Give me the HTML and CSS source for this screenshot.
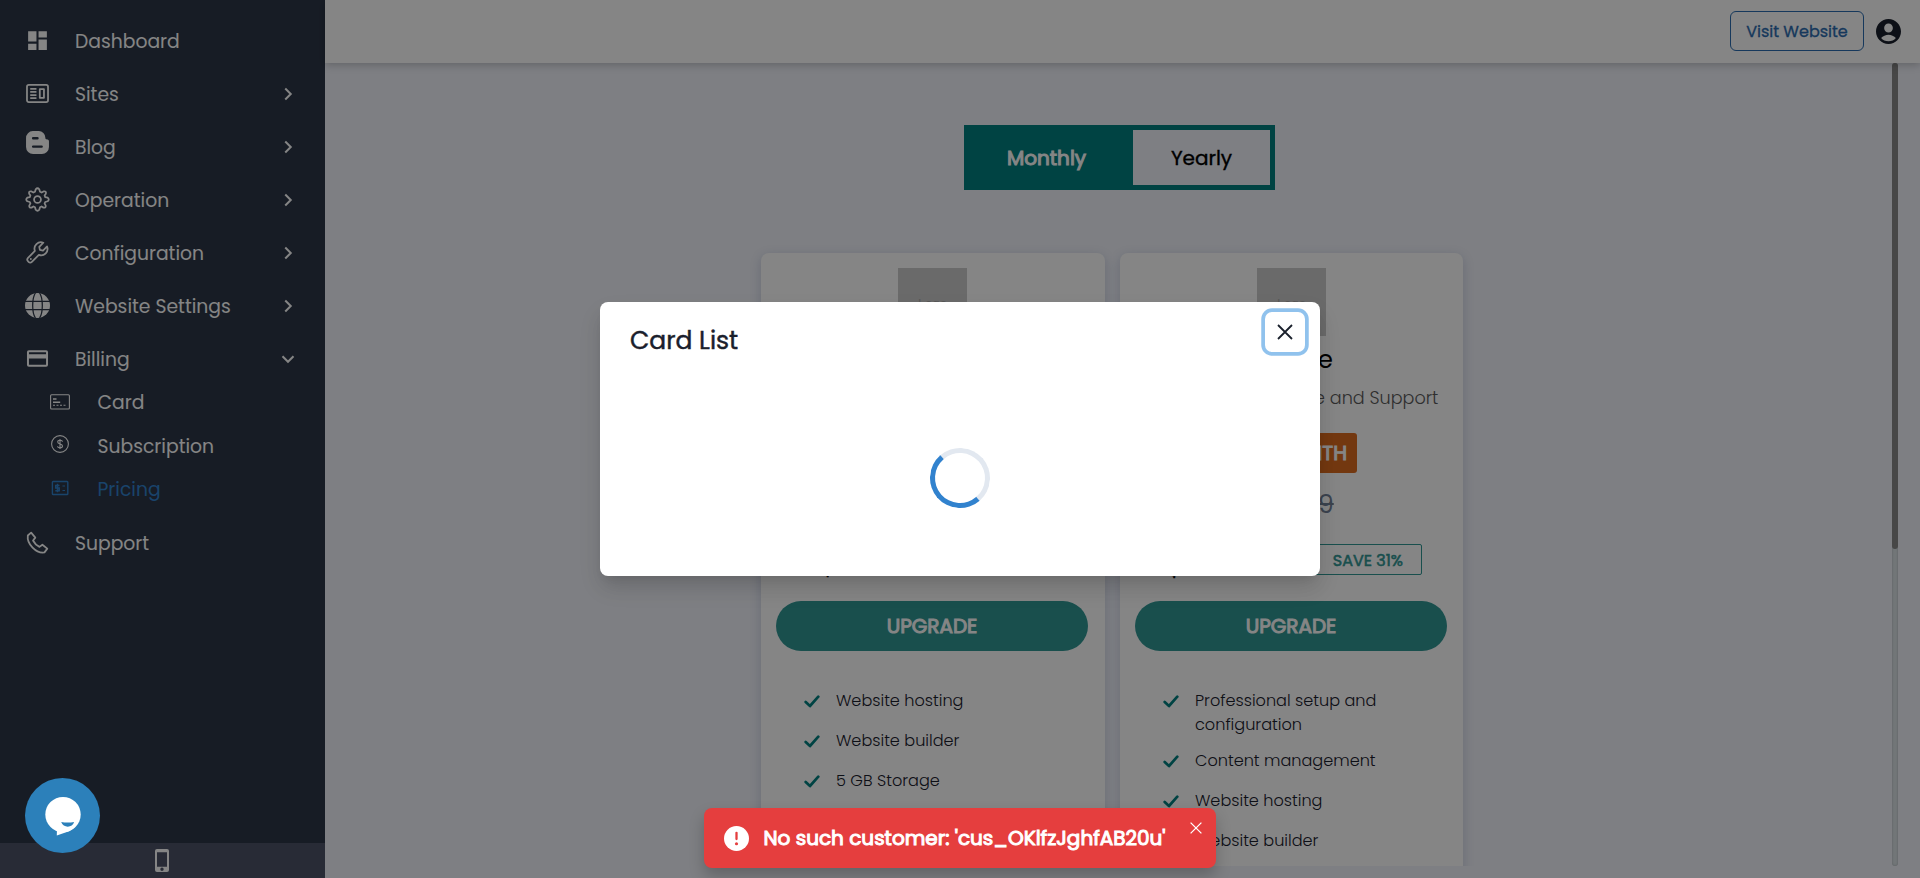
FILE: index.html
```html
<!DOCTYPE html>
<html lang="en">
<head>
<meta charset="utf-8">
<title>Pricing</title>
<link rel="stylesheet" href="styles.css">
</head>
<body>
<div class="app">
  <aside class="sidebar">
    <nav class="nav">
      <a class="item"><svg class="ico" viewBox="0 0 24 24"><path d="M3 13h8V3H3v10zm0 8h8v-6H3v6zm10 0h8V11h-8v10zm0-18v6h8V3h-8z"/></svg><span>Dashboard</span></a>
      <a class="item"><svg class="ico line" viewBox="0 0 24 24"><rect x="1.900" y="3.700" width="20.200" height="16.600" rx="1.800"/><path d="M5 7.500h6M5 10.500h6M5 13.500h6M5 16.500h6M14.200 7.900h4v8.200h-4z"/></svg><span>Sites</span><svg class="chev" viewBox="0 0 24 24"><path d="M9 6l6 6-6 6"/></svg></a>
      <a class="item"><svg class="ico raised" viewBox="0 0 24 24"><path fill-rule="evenodd" d="M7.500 1h5.700a6.300 6.300 0 0 1 6.300 6.300c0 1.300.6 1.900 1.700 1.900 1.100 0 1.800.6 1.800 1.700v5.300A6.800 6.800 0 0 1 16.200 23H7.800A6.800 6.800 0 0 1 1 16.200V7.800A6.700 6.700 0 0 1 7.500 1zm.3 5.800a1.150 1.150 0 0 0 0 2.300h4.200a1.150 1.150 0 0 0 0-2.300zm0 8a1.150 1.150 0 0 0 0 2.300h8.200a1.150 1.150 0 0 0 0-2.300z"/></svg><span>Blog</span><svg class="chev" viewBox="0 0 24 24"><path d="M9 6l6 6-6 6"/></svg></a>
      <a class="item"><svg class="ico line" viewBox="0 0 24 24"><circle cx="12" cy="12" r="3.300"/><path d="M10.300 2.200Q12 .2 13.700 2.200L14.400 4.600 16 5.300 18.200 4.100Q20.700 4 20 6.400L18.800 8.200 19.400 9.700 21.800 10.300Q23.800 12 21.800 13.700L19.400 14.400 18.800 15.800 19.900 17.900Q20.200 20.300 17.700 19.800L15.900 18.700 14.400 19.400 13.700 21.800Q12 23.800 10.300 21.800L9.600 19.400 8.100 18.700 6.300 19.800Q3.800 20.300 4.100 17.900L5.200 15.800 4.600 14.400 2.200 13.700Q.2 12 2.200 10.300L4.600 9.700 5.200 8.200 4 6.400Q3.300 4 5.800 4.100L8 5.300 9.600 4.600z"/></svg><span>Operation</span><svg class="chev" viewBox="0 0 24 24"><path d="M9 6l6 6-6 6"/></svg></a>
      <a class="item"><svg class="ico line" viewBox="0 0 24 24"><path d="M21.200 6.200l-3.900 3.900-3-.6-.6-3 3.900-3.900a6.200 6.200 0 0 0-8.100 7.900L2.900 17.200a2.300 2.300 0 0 0 0 3.200l.5.500a2.300 2.300 0 0 0 3.200 0l6.700-6.600a6.200 6.200 0 0 0 7.900-8.100z"/><circle class="dot" cx="5.600" cy="18.300" r=".9"/></svg><span>Configuration</span><svg class="chev" viewBox="0 0 24 24"><path d="M9 6l6 6-6 6"/></svg></a>
      <a class="item"><svg class="ico" viewBox="0 0 24 24"><circle cx="12" cy="12" r="12"/><path class="cut" d="M0 8h24M0 16h24M10 0C6.500 5 6.500 19 10 24M14 0c3.500 5 3.500 19 0 24"/></svg><span>Website Settings</span><svg class="chev" viewBox="0 0 24 24"><path d="M9 6l6 6-6 6"/></svg></a>
      <a class="item"><svg class="ico" viewBox="0 0 24 24"><path fill-rule="evenodd" d="M3.800 4h16.400a1.900 1.900 0 0 1 1.900 2v12a1.900 1.900 0 0 1-1.900 2H3.800a1.900 1.900 0 0 1-1.900-2V6a1.900 1.900 0 0 1 1.900-2zm0 2v1.800h16.400V6zm0 6v6h16.400v-6z"/></svg><span>Billing</span><svg class="chev" viewBox="0 0 24 24"><path d="M6 9l6 6 6-6"/></svg></a>
      <div class="sub">
        <a class="subitem"><svg class="sico" viewBox="0 0 20 20"><rect x=".6" y="2.800" width="18.800" height="14.200" rx="1"/><path d="M3 7h3.500M3 10.300h7.200" stroke-width="1.500"/><path d="M3 13.300h13" stroke-dasharray="2 1.500"/></svg><span>Card</span></a>
        <a class="subitem"><svg class="sico up" viewBox="0 0 20 20"><circle cx="10" cy="10" r="8.400"/><path d="M12.500 7.700C12.300 5.700 7.700 5.700 7.700 8s4.800 1.700 4.800 4-4.800 2.500-5 .2M10 5v10"/></svg><span>Subscription</span></a>
        <a class="subitem active"><svg class="sico up" viewBox="0 0 20 20"><rect x="2.400" y="3.500" width="15.400" height="13" rx=".8" stroke-width="1.400"/><path d="M9.500 7.500H5.700v2.500h3.500v2.700H5.300M7.500 5.700v8.600" stroke-width="1.500"/><path d="M12.500 8h2.500M12.500 12.500h2.500"/></svg><span>Pricing</span></a>
      </div>
      <a class="item"><svg class="ico line" viewBox="0 0 24 24"><path d="M2.700 5.300L5.900 2.500l4 4.800-2.200 2.800c1.300 2.600 3.400 4.800 6.200 6.100l2.800-2.100 4.700 3.800-2.700 3.600C10.700 22.800 1.600 13.200 2.700 5.300z"/></svg><span>Support</span></a>
    </nav>
    <div class="sidefoot"><svg class="phone" viewBox="0 0 14 23"><path fill-rule="evenodd" d="M2 0h10a2 2 0 0 1 2 2v19a2 2 0 0 1-2 2H2a2 2 0 0 1-2-2V2a2 2 0 0 1 2-2zm0 3.200v14.600h10V3.200zm5 15.400a1.700 1.700 0 1 0 0 3.400 1.700 1.700 0 0 0 0-3.400z"/></svg></div>
  </aside>
  <div class="main">
    <header class="header">
      <button class="visit strong">Visit Website</button>
      <svg class="avatar" viewBox="2 2 20 20"><path d="M12 2C6.480 2 2 6.480 2 12s4.480 10 10 10 10-4.480 10-10S17.520 2 12 2zm0 3.500c1.900 0 3.500 1.600 3.500 3.600S13.900 12.700 12 12.700 8.500 11.100 8.500 9.100s1.600-3.600 3.500-3.600zm0 14.300c-2.500 0-4.500-.9-5.900-2.600 1.200-1.700 3.900-2.700 5.900-2.700s4.700 1 5.900 2.700c-1.400 1.700-3.400 2.600-5.900 2.600z"/></svg>
    </header>
    <div class="scroll">
      <div class="content">
        <div class="toggle"><div class="on heavy">Monthly</div><div class="off strong">Yearly</div></div>
        <div class="cards">
          <section class="card">
            <div class="logo">Logo</div>
            <div class="price"><b class="strong">$</b></div>
            <button class="upgrade heavy">UPGRADE</button>
            <ul class="list">
              <li><svg class="tick" viewBox="0 0 16 13"><path d="M1.700 7l4.300 4L14.300 1.700"/></svg><span>Website hosting</span></li>
              <li><svg class="tick" viewBox="0 0 16 13"><path d="M1.700 7l4.300 4L14.300 1.700"/></svg><span>Website builder</span></li>
              <li><svg class="tick" viewBox="0 0 16 13"><path d="M1.700 7l4.300 4L14.300 1.700"/></svg><span>5 GB Storage</span></li>
            </ul>
          </section>
          <section class="card premium">
            <div class="logo">Logo</div>
            <div class="plan">e</div>
            <div class="desc">e and Support</div>
            <div class="badge heavy">NTH</div>
            <div class="old">9</div>
            <div class="price"><b class="strong">$</b><span class="save strong">SAVE 31%</span></div>
            <button class="upgrade heavy">UPGRADE</button>
            <ul class="list">
              <li><svg class="tick" viewBox="0 0 16 13"><path d="M1.700 7l4.300 4L14.300 1.700"/></svg><span>Professional setup and<br>configuration</span></li>
              <li><svg class="tick" viewBox="0 0 16 13"><path d="M1.700 7l4.300 4L14.300 1.700"/></svg><span>Content management</span></li>
              <li><svg class="tick" viewBox="0 0 16 13"><path d="M1.700 7l4.300 4L14.300 1.700"/></svg><span>Website hosting</span></li>
              <li><svg class="tick" viewBox="0 0 16 13"><path d="M1.700 7l4.300 4L14.300 1.700"/></svg><span>Website builder</span></li>
            </ul>
          </section>
        </div>
      </div>
      <div class="track"><div class="thumb"></div></div>
    </div>
  </div>
</div>
<div class="overlay">
  <div class="modal">
    <div class="mhead"><h2 class="strong">Card List</h2><button class="close"><svg viewBox="0 0 16 16"><path d="M1 1l14 14M15 1L1 15"/></svg></button></div>
    <div class="mbody"><div class="spinner"></div></div>
  </div>
</div>
<div class="chat"><svg viewBox="0 0 75 75"><circle class="bub" cx="38" cy="36.600" r="17.700"/><path class="bub" d="M32 50l-.2 7.500L44 53.300l6-4z"/><path class="smile" d="M36.200 44q6.500 1 12.900 0c-1.500 6.200-11 6.200-12.900 0z"/></svg></div>
<div class="toast">
  <svg class="warn" viewBox="0 0 24 24"><circle cx="12" cy="12" r="12"/><path d="M12 6.500v6"/><circle class="wdot" cx="12" cy="17" r="1.500"/></svg>
  <span class="msg heavy">No such customer: 'cus_OKlfzJghfAB20u'</span>
  <svg class="tx" viewBox="0 0 12 12"><path d="M.6.6l10.800 10.800M11.400.6L.6 11.400"/></svg>
</div>
</body>
</html>
```

FILE: styles.css
```css
* { box-sizing: border-box; }
body { margin: 0; height: 878px; overflow: hidden; font-family: Poppins, Inter, "Open Sans", sans-serif; color: #1a202c; background: #f1f3fb; }
button { font: inherit; border: 0; background: none; padding: 0; }
/* emboldened regular weight keeps the narrow regular advances */
.strong, .heavy { font-weight: 400; -webkit-text-stroke: .018em currentColor; }
.heavy { -webkit-text-stroke-width: .05em; }
.app { display: flex; height: 878px; }

.sidebar { width: 325px; flex: none; background: #2d3748; display: flex; flex-direction: column; color: #fff; }
.nav { flex: 1; padding-top: 14px; }
.item { display: flex; align-items: center; height: 53px; padding: 0 25px; font-size: 18.750px; }
.item span { flex: 1; margin-left: 25px; white-space: nowrap; padding-top: 1px; }
.ico { width: 25px; height: 25px; fill: #fff; overflow: visible; }
.ico.line { fill: none; stroke: #fff; stroke-width: 1.700; stroke-linejoin: round; }
.ico.raised { margin-bottom: 9px; }
.ico .cut { fill: none; stroke: #2d3748; stroke-width: 1.200; }
.ico .dot { fill: #fff; stroke: none; }
.chev { width: 22px; height: 22px; fill: none; stroke: #fff; stroke-width: 2.200; margin-right: 1px; }
.sub { margin: -5px 0 5px; }
.subitem { display: flex; align-items: center; height: 43.700px; padding-left: 50px; font-size: 18.750px; }
.subitem span { margin-left: 27.500px; padding-top: 1px; }
.sico { width: 20px; height: 20px; fill: none; stroke: #fff; stroke-width: 1.100; }
.sico.up { margin-bottom: 3px; }
.active { color: #3182ce; }
.active .sico { stroke: #3182ce; }
.sidefoot { height: 35px; background: #4d5368; display: flex; justify-content: center; align-items: center; padding-right: 1px; }
.phone { width: 14px; height: 23px; fill: #fff; }

.main { flex: 1; display: flex; flex-direction: column; min-width: 0; }
.header { height: 63px; background: #fff; display: flex; align-items: center; justify-content: flex-end; gap: 12px; padding: 0 19px 1px 0; box-shadow: 0 2px 8px rgba(0,0,0,.22); z-index: 1; }
.visit { width: 134px; height: 40px; border: 1px solid #2b6cb0; border-radius: 6px; color: #2b6cb0; font-size: 16px; }
.avatar { width: 25px; height: 25px; fill: #1a202c; }
.scroll { display: flex; height: 803px; padding-right: 22px; overflow: hidden; }
.content { flex: 1; padding: 62px 0 0 436px; }
.toggle { display: flex; width: 311px; height: 65px; margin-left: 203px; border: 5px solid #008080; font-size: 20px; }
.on { width: 164px; background: #008080; color: #fff; display: flex; align-items: center; padding: 1px 0 0 38px; }
.off { flex: 1; color: #000; display: flex; align-items: center; justify-content: center; padding-top: 1px; }
.cards { display: flex; gap: 15px; margin-top: 63px; }
.card { width: 344px; height: 700px; background: #fff; border-radius: 8px; padding: 15px 16px 0 15px; box-shadow: 0 3px 12px rgba(40,60,110,.2); display: flex; flex-direction: column; }
.card.premium { width: 343px; }
.logo { width: 69px; height: 68px; flex: none; margin-left: 122px; background: #ccc; color: #a8a8a8; font-size: 13px; text-align: center; line-height: 71px; font-family: Roboto, sans-serif; }
.plan { height: 48px; line-height: 48px; padding-left: 183px; font-size: 24px; color: #000; }
.desc { height: 32px; line-height: 28px; padding-left: 179px; white-space: nowrap; font-size: 17.600px; font-weight: 300; color: #5a5a5a; }
.badge { width: 50px; margin-left: 172px; margin-top: 17px; height: 40px; line-height: 40px; background: #dd6b20; border-radius: 0 3px 3px 0; color: #fff; text-align: right; padding-right: 10px; font-size: 20px; }
.old { height: 62px; line-height: 63px; padding-left: 183px; font-size: 25px; color: #718096; text-decoration: line-through; }
.price { height: 67px; margin-top: auto; display: flex; justify-content: space-between; align-items: flex-start; padding: 9px 10px 0 42px; font-size: 26px; line-height: 46px; }
.premium .price { padding: 9px 25px 0 29.500px; }
.price b { width: 20px; text-align: center; color: #000; }
.save { width: 133px; height: 31px; border: 1px solid #319795; border-radius: 2px; color: #319795; font-size: 16px; line-height: 31px; text-align: right; padding-right: 18px; -webkit-text-stroke-width: .036em; }
.upgrade { width: 312px; height: 50px; flex: none; border-radius: 25px; background: #319795; color: #fff; font-size: 20px; }
.list { list-style: none; margin: 38px 0 0; padding: 0 0 0 28px; height: 264px; flex: none; font-size: 16.100px; font-weight: 300; line-height: 24px; }
.list li { display: flex; gap: 16px; min-height: 28px; margin-bottom: 12px; white-space: nowrap; }
.tick { width: 16px; height: 13px; margin-top: 6px; fill: none; stroke: #008080; stroke-width: 2.700; stroke-linecap: round; stroke-linejoin: round; }
.track { width: 6px; border-radius: 3px; background: #dae2e6; box-shadow: inset 0 0 2px rgba(0,0,0,.25); }
.thumb { height: 486px; border-radius: 3px; background: #888; }

.overlay { position: absolute; inset: 0; z-index: 2; background: rgba(0,0,0,.48); display: flex; justify-content: center; align-items: flex-start; padding-top: 302px; }
.modal { width: 720px; height: 274px; background: #fff; border-radius: 8px; box-shadow: 0 12px 19px -4px rgba(0,0,0,.1), 0 5px 8px -3px rgba(0,0,0,.05), 0 12px 25px rgba(0,0,0,.08); }
.mhead { display: flex; justify-content: space-between; padding: 10px 15px 0 30px; }
.mhead h2 { margin: 9px 0 0; font-size: 25px; line-height: 40px; }
.close { width: 40px; height: 40px; border-radius: 7px; box-shadow: 0 0 0 3.750px #90c2ed; display: flex; align-items: center; justify-content: center; padding: 0; }
.close svg { width: 16px; height: 16px; fill: none; stroke: #1a202c; stroke-width: 1.800; }
.mbody { display: flex; justify-content: center; padding-top: 87px; }
.spinner { width: 60px; height: 60px; border-radius: 50%; border: 5px solid #e2e8f0; border-bottom-color: #3182ce; border-left-color: #3182ce; transform: rotate(4deg); }
.chat { position: absolute; z-index: 3; left: 25px; top: 778px; width: 75px; height: 75px; border-radius: 50%; background: #2c80ba; }
.bub { fill: #fff; }
.smile { fill: #2c80ba; }
.toast { position: absolute; z-index: 3; left: 704px; top: 808px; width: 512px; height: 60px; border-radius: 8px; background: #e53e3e; color: #fff; display: flex; align-items: center; padding: 0 14px 0 20px; box-shadow: 0 8px 15px rgba(0,0,0,.22); }
.warn { width: 25px; height: 25px; fill: #fff; stroke: #e53e3e; stroke-width: 2.200; stroke-linecap: round; }
.warn circle { stroke: none; }
.warn .wdot { fill: #e53e3e; }
.msg { flex: 1; margin-left: 14.500px; white-space: nowrap; font-size: 20px; }
.tx { width: 12px; height: 12px; margin-bottom: 20px; fill: none; stroke: #fff; stroke-width: 1.300; }
```
